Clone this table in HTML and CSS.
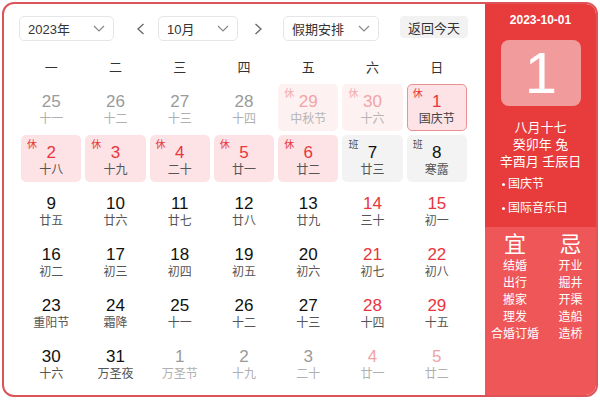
FILE: index.html
```html
<!DOCTYPE html>
<html lang="zh-CN">
<head>
<meta charset="utf-8">
<link rel="stylesheet" href="styles.css">
</head>
<body>
<div class="calendar">
  <div class="main">
    <div class="toolbar">
      <div class="select sel-year"><span>2023年</span><svg class="chev" width="12" height="7" viewBox="0 0 12 7"><path d="M1 1 L6 6 L11 1" fill="none" stroke="#888" stroke-width="1.2"/></svg></div>
      <div class="arrow arrow-prev"><svg width="9" height="12" viewBox="0 0 9 12"><path d="M7.5 1 L2 6 L7.5 11" fill="none" stroke="#666" stroke-width="1.3"/></svg></div>
      <div class="select sel-month"><span>10月</span><svg class="chev" width="12" height="7" viewBox="0 0 12 7"><path d="M1 1 L6 6 L11 1" fill="none" stroke="#888" stroke-width="1.2"/></svg></div>
      <div class="arrow arrow-next"><svg width="9" height="12" viewBox="0 0 9 12"><path d="M1.5 1 L7 6 L1.5 11" fill="none" stroke="#666" stroke-width="1.3"/></svg></div>
      <div class="select sel-holiday"><span>假期安排</span><svg class="chev" width="12" height="7" viewBox="0 0 12 7"><path d="M1 1 L6 6 L11 1" fill="none" stroke="#888" stroke-width="1.2"/></svg></div>
      <div class="btn-today">返回今天</div>
    </div>
    <div class="weekdays">
      <div>一</div><div>二</div><div>三</div><div>四</div><div>五</div><div>六</div><div>日</div>
    </div>
    <div class="grid">
      <div class="cell other"><div class="num">25</div><div class="lunar">十一</div></div>
      <div class="cell other"><div class="num">26</div><div class="lunar">十二</div></div>
      <div class="cell other"><div class="num">27</div><div class="lunar">十三</div></div>
      <div class="cell other"><div class="num">28</div><div class="lunar">十四</div></div>
      <div class="cell other rest"><span class="tag">休</span><div class="num">29</div><div class="lunar">中秋节</div></div>
      <div class="cell other rest"><span class="tag">休</span><div class="num">30</div><div class="lunar">十六</div></div>
      <div class="cell rest today"><span class="tag">休</span><div class="num">1</div><div class="lunar">国庆节</div></div>

      <div class="cell rest"><span class="tag">休</span><div class="num">2</div><div class="lunar">十八</div></div>
      <div class="cell rest"><span class="tag">休</span><div class="num">3</div><div class="lunar">十九</div></div>
      <div class="cell rest"><span class="tag">休</span><div class="num">4</div><div class="lunar">二十</div></div>
      <div class="cell rest"><span class="tag">休</span><div class="num">5</div><div class="lunar">廿一</div></div>
      <div class="cell rest"><span class="tag">休</span><div class="num">6</div><div class="lunar">廿二</div></div>
      <div class="cell work"><span class="tag">班</span><div class="num">7</div><div class="lunar">廿三</div></div>
      <div class="cell work"><span class="tag">班</span><div class="num">8</div><div class="lunar">寒露</div></div>

      <div class="cell"><div class="num">9</div><div class="lunar">廿五</div></div>
      <div class="cell"><div class="num">10</div><div class="lunar">廿六</div></div>
      <div class="cell"><div class="num">11</div><div class="lunar">廿七</div></div>
      <div class="cell"><div class="num">12</div><div class="lunar">廿八</div></div>
      <div class="cell"><div class="num">13</div><div class="lunar">廿九</div></div>
      <div class="cell weekend"><div class="num">14</div><div class="lunar">三十</div></div>
      <div class="cell weekend"><div class="num">15</div><div class="lunar">初一</div></div>

      <div class="cell"><div class="num">16</div><div class="lunar">初二</div></div>
      <div class="cell"><div class="num">17</div><div class="lunar">初三</div></div>
      <div class="cell"><div class="num">18</div><div class="lunar">初四</div></div>
      <div class="cell"><div class="num">19</div><div class="lunar">初五</div></div>
      <div class="cell"><div class="num">20</div><div class="lunar">初六</div></div>
      <div class="cell weekend"><div class="num">21</div><div class="lunar">初七</div></div>
      <div class="cell weekend"><div class="num">22</div><div class="lunar">初八</div></div>

      <div class="cell"><div class="num">23</div><div class="lunar">重阳节</div></div>
      <div class="cell"><div class="num">24</div><div class="lunar">霜降</div></div>
      <div class="cell"><div class="num">25</div><div class="lunar">十一</div></div>
      <div class="cell"><div class="num">26</div><div class="lunar">十二</div></div>
      <div class="cell"><div class="num">27</div><div class="lunar">十三</div></div>
      <div class="cell weekend"><div class="num">28</div><div class="lunar">十四</div></div>
      <div class="cell weekend"><div class="num">29</div><div class="lunar">十五</div></div>

      <div class="cell"><div class="num">30</div><div class="lunar">十六</div></div>
      <div class="cell"><div class="num">31</div><div class="lunar">万圣夜</div></div>
      <div class="cell other"><div class="num">1</div><div class="lunar">万圣节</div></div>
      <div class="cell other"><div class="num">2</div><div class="lunar">十九</div></div>
      <div class="cell other"><div class="num">3</div><div class="lunar">二十</div></div>
      <div class="cell other weekend"><div class="num">4</div><div class="lunar">廿一</div></div>
      <div class="cell other weekend"><div class="num">5</div><div class="lunar">廿二</div></div>
    </div>
  </div>
  <div class="side">
    <div class="side-top">
      <div class="side-date">2023-10-01</div>
      <div class="side-day">1</div>
      <div class="side-lunar">
        <div>八月十七</div>
        <div>癸卯年 兔</div>
        <div>辛酉月 壬辰日</div>
      </div>
      <div class="fest fest-first">国庆节</div>
      <div class="fest">国际音乐日</div>
    </div>
    <div class="side-bottom">
      <div class="yj">
        <div class="yj-col">
          <div class="yj-head">宜</div>
          <div>结婚</div><div>出行</div><div>搬家</div><div>理发</div><div>合婚订婚</div>
        </div>
        <div class="yj-col">
          <div class="yj-head">忌</div>
          <div>开业</div><div>掘井</div><div>开渠</div><div>造船</div><div>造桥</div>
        </div>
      </div>
    </div>
  </div>
</div>
</body>
</html>
```

FILE: styles.css
```css
* { box-sizing: border-box; }
html, body { margin: 0; padding: 0; background: #fff; }
body {
  font-family: "Liberation Sans", "Noto Sans CJK SC", sans-serif;
  color: #333;
}
.calendar {
  margin: 2px 0 0 2px;
  width: 596px;
  height: 395px;
  border: 2px solid #dc5458;
  border-radius: 12px;
  overflow: hidden;
  display: flex;
}
.main {
  width: 481px;
  padding: 12px 0 0 17px;
}
.toolbar {
  display: flex;
  align-items: center;
  height: 25px;
  margin-left: -2px;
}
.select {
  height: 25px;
  border: 1px solid #e6e6e6;
  border-radius: 5px;
  display: flex;
  align-items: center;
  justify-content: space-between;
  padding: 0 8px 0 8px;
  font-size: 13px;
  color: #333;
}
.sel-year { width: 95px; }
.sel-month { width: 80px; margin-left: 8px; }
.sel-holiday { width: 96px; margin-left: 15px; }
.chev { display: block; }
.arrow {
  width: 20px;
  height: 20px;
  display: flex;
  align-items: center;
  justify-content: center;
}
.arrow-prev { margin-left: 16px; }
.arrow-next { margin-left: 10px; }
.btn-today {
  margin-left: 21px;
  width: 68px;
  height: 22px;
  background: #f2f2f2;
  border-radius: 4px;
  font-size: 13px;
  color: #333;
  display: flex;
  align-items: center;
  justify-content: center;
  margin-top: -3px;
}
.weekdays {
  display: grid;
  grid-template-columns: repeat(7, 1fr);
  column-gap: 4px;
  width: 446px;
  margin-top: 15px;
  height: 24px;
  line-height: 24px;
  text-align: center;
  font-size: 13px;
  color: #333;
}
.grid {
  display: grid;
  grid-template-columns: repeat(7, 1fr);
  grid-auto-rows: 47px;
  gap: 4px;
  width: 446px;
  margin-top: 4px;
}
.cell {
  position: relative;
  border-radius: 5px;
  text-align: center;
  padding-top: 8px;
}
.num {
  font-size: 17px;
  line-height: 20px;
  color: #111;
}
.lunar {
  font-size: 12px;
  line-height: 14px;
  color: #555;
}
.tag {
  position: absolute;
  top: 4px;
  left: 6px;
  font-size: 10px;
  line-height: 12px;
}
.weekend .num { color: #e8363c; }
.other .num { color: #9a9a9a; }
.other .lunar { color: #b0b0b0; }
.other.weekend .num { color: #f0a3a6; }
.rest { background: #fde3e5; }
.rest .num { color: #e8363c; }
.rest .tag { color: #e8363c; }
.rest.other { background: #fef1f2; }
.rest.other .num { color: #f2a4a7; }
.rest.other .tag { color: #f2adb0; }
.rest.other .lunar { color: #b5b5b5; }
.today { border: 1px solid #ee8f92; padding-top: 7px; }
.today .tag { top: 3px; left: 5px; }
.today .lunar { color: #444; }
.work { background: #f3f3f3; }
.work .tag { color: #555; }
.side {
  width: 111px;
  display: flex;
  flex-direction: column;
  color: #fff;
}
.side-top {
  background: #e83b3c;
  height: 223px;
  padding-top: 8px;
  display: flex;
  flex-direction: column;
  align-items: center;
}
.side-date {
  font-size: 12px;
  font-weight: bold;
  line-height: 16px;
}
.side-day {
  margin-top: 12px;
  width: 80px;
  height: 66px;
  border-radius: 8px;
  background: #f29b9c;
  font-size: 58px;
  line-height: 66px;
  text-align: center;
  margin-left: 1px;
}
.side-lunar {
  margin-top: 13px;
  font-size: 13px;
  line-height: 17px;
  text-align: center;
}
.fest {
  align-self: stretch;
  padding-left: 17px;
  font-size: 12px;
  line-height: 24px;
  display: flex;
  align-items: center;
}
.fest-first { margin-top: 2px; }
.fest::before {
  content: "";
  width: 3px;
  height: 3px;
  border-radius: 50%;
  background: #fff;
  margin-right: 3px;
}
.side-bottom {
  flex: 1;
  background: #ee5657;
  padding-top: 5px;
}
.yj {
  display: grid;
  grid-template-columns: 60px 51px;
}
.yj-col {
  text-align: center;
  font-size: 12px;
  line-height: 17px;
}
.yj-head {
  font-size: 22px;
  line-height: 26px;
}
```
